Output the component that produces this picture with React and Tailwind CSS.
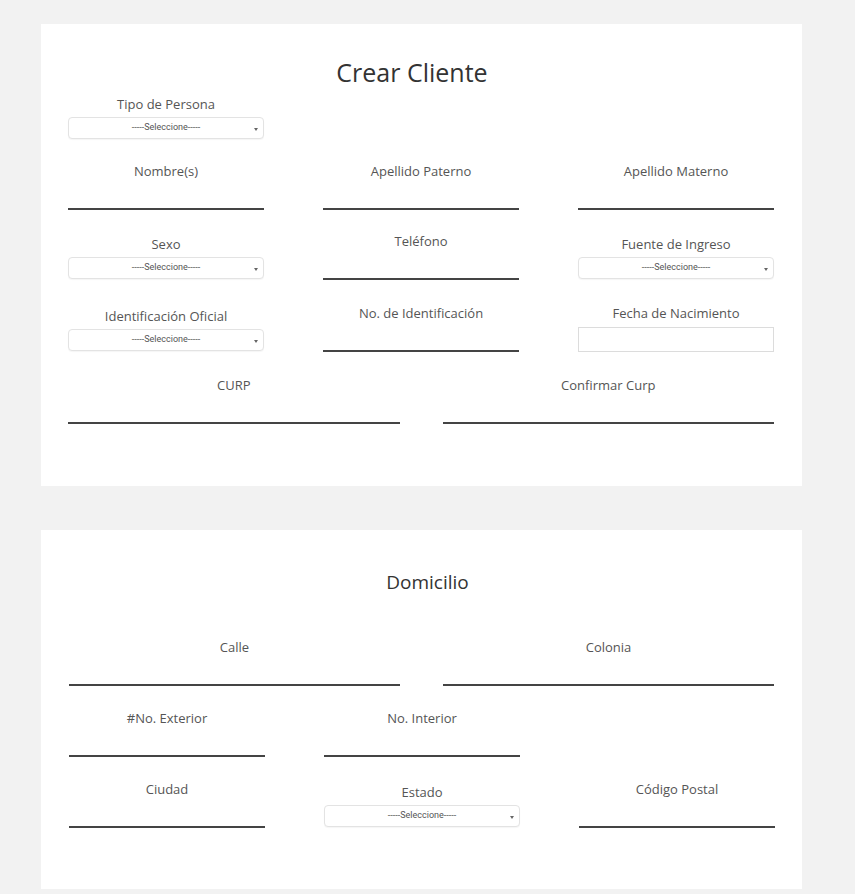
const labelCls = 'block h-5 leading-5 text-[13px] text-[#555] text-center';

const TextField = ({ label }) => (
  <div className="flex flex-col">
    <span className={labelCls}>{label}</span>
    <div className="h-[29px] border-b-2 border-[#444]" />
  </div>
);

const SelectField = ({ label }) => (
  <div className="flex flex-col pt-[3px]">
    <span className={labelCls}>{label}</span>
    <div className="relative mt-[3px] h-[22px] rounded-[4px] border border-[#e3e3e3] bg-white shadow-[0_1px_1px_rgba(0,0,0,0.04)] flex items-center justify-center">
      <span className="text-[9px] text-[#555] font-['Roboto','Liberation_Sans',sans-serif]">
        -----Seleccione-----
      </span>
      {/* caret */}
      <span className="absolute right-[5px] top-[10px] w-0 h-0 border-l-[2px] border-r-[2px] border-t-[3px] border-l-transparent border-r-transparent border-t-[#666]" />
    </div>
  </div>
);

const DateField = ({ label }) => (
  <div className="flex flex-col">
    <span className={labelCls}>{label}</span>
    <div className="mt-[4px] h-[25px] border border-[#dcdcdc] bg-white" />
  </div>
);

const Spacer = () => <div />;

export default function App() {
  return (
    <div className="min-h-screen w-full bg-[#f2f2f2] pt-[24px] pb-[5px] font-['Open_Sans','Liberation_Sans',sans-serif]">
      {/* Crear Cliente */}
      <div className="ml-[41px] w-[761px] bg-white pt-[32px] pb-[62px] pl-[27px] pr-[28px]">
        <h2 className="pr-[18px] text-center text-[25px] leading-8 text-[#333]">Crear Cliente</h2>

        <div className="mt-[3px] grid grid-cols-[196px_196px_196px] gap-x-[59px]">
          <SelectField label="Tipo de Persona" />
          <Spacer />
          <Spacer />
        </div>

        <div className="mt-[22px] grid grid-cols-[196px_196px_196px] gap-x-[59px]">
          <TextField label="Nombre(s)" />
          <TextField label="Apellido Paterno" />
          <TextField label="Apellido Materno" />
        </div>

        <div className="mt-[21px] grid grid-cols-[196px_196px_196px] gap-x-[59px] items-start">
          <SelectField label="Sexo" />
          <TextField label="Teléfono" />
          <SelectField label="Fuente de Ingreso" />
        </div>

        <div className="mt-[23px] grid grid-cols-[196px_196px_196px] gap-x-[59px] items-start">
          <SelectField label="Identificación Oficial" />
          <TextField label="No. de Identificación" />
          <DateField label="Fecha de Nacimiento" />
        </div>

        <div className="mt-[23px] grid grid-cols-2 gap-x-[43px]">
          <TextField label="CURP" />
          <TextField label="Confirmar Curp" />
        </div>
      </div>

      {/* Domicilio */}
      <div className="mt-[44px] ml-[41px] w-[761px] bg-white pt-[38px] pb-[61px] pl-[28px] pr-[28px]">
        <h3 className="pl-[12px] text-center text-[19px] leading-7 text-[#333]">Domicilio</h3>

        <div className="mt-[41px] grid grid-cols-2 gap-x-[43px]">
          <TextField label="Calle" />
          <TextField label="Colonia" />
        </div>

        <div className="mt-[22px] grid grid-cols-[196px_196px_196px] gap-x-[59px]">
          <TextField label="#No. Exterior" />
          <TextField label="No. Interior" />
          <Spacer />
        </div>

        <div className="mt-[22px] grid grid-cols-[196px_196px_196px] gap-x-[59px] items-start">
          <TextField label="Ciudad" />
          <SelectField label="Estado" />
          <TextField label="Código Postal" />
        </div>
      </div>
    </div>
  );
}
